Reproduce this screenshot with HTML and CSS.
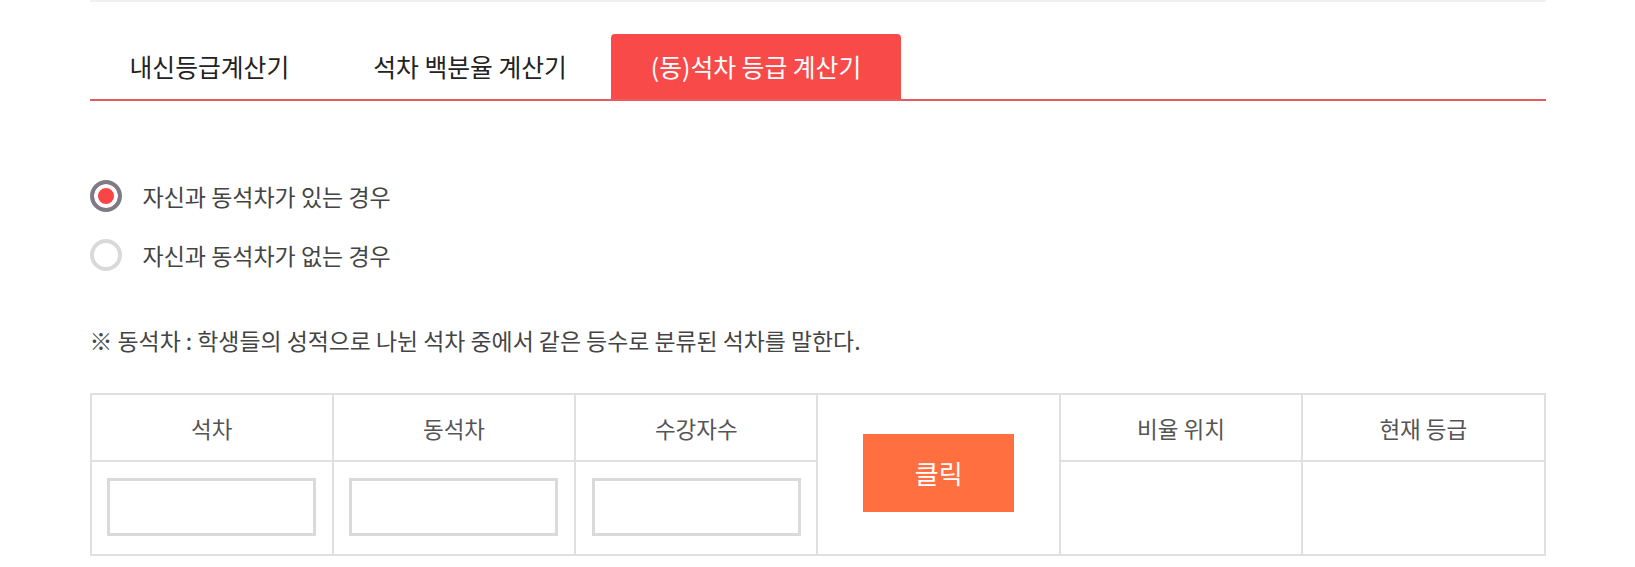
FILE: index.html
```html
<!DOCTYPE html>
<html>
<head>
    <title>석차 등급 계산기</title>
    <link rel="stylesheet" href="styles.css">
</head>
<body>
    <div class="wrap">
        <ul class="tabs">
            <li class="tab">내신등급계산기</li>
            <li class="tab">석차 백분율 계산기</li>
            <li class="tab active">(동)석차 등급 계산기</li>
        </ul>

        <div class="options">
            <label class="option">
                <input type="radio" name="mode" class="radio" checked>
                <span>자신과 동석차가 있는 경우</span>
            </label>
            <label class="option">
                <input type="radio" name="mode" class="radio">
                <span>자신과 동석차가 없는 경우</span>
            </label>
        </div>

        <p class="note">※ 동석차 : 학생들의 성적으로 나뉜 석차 중에서 같은 등수로 분류된 석차를 말한다.</p>

        <table class="calc">
            <tr class="head-row">
                <th>석차</th>
                <th>동석차</th>
                <th>수강자수</th>
                <td rowspan="2" class="btn-cell"><button class="calc-button" id="calc">클릭</button></td>
                <th>비율 위치</th>
                <th>현재 등급</th>
            </tr>
            <tr class="body-row">
                <td><input type="text" class="field" id="rank"></td>
                <td><input type="text" class="field" id="tie"></td>
                <td><input type="text" class="field" id="total"></td>
                <td id="ratio"></td>
                <td id="grade"></td>
            </tr>
        </table>
    </div>
</body>
</html>
```

FILE: styles.css
```css
body {
    margin: 0;
    padding: 0;
    background-color: #fff;
    font-family: "Noto Sans CJK KR", "Noto Sans", sans-serif;
    color: #444;
}

.wrap {
    width: 1456px;
    margin: 0 auto;
    border-top: 2px solid #f0f0f0;
}

/* 탭 메뉴 */
.tabs {
    list-style: none;
    margin: 32px 0 0;
    padding: 0;
    border-bottom: 2px solid #e65c5c;
    display: flex;
    gap: 4px;
}

.tab {
    height: 65px;
    line-height: 65px;
    padding: 0 40px;
    font-size: 24.8px;
    color: #222;
    border-radius: 4px 4px 0 0;
    cursor: pointer;
}

.tab.active {
    background-color: #f94a4a;
    color: #fff;
}

/* 라디오 선택 */
.options {
    margin-top: 75px;
    display: flex;
    flex-direction: column;
    gap: 19px;
}

.option {
    display: flex;
    align-items: center;
    height: 40px;
    font-size: 23px;
    color: #444;
    cursor: pointer;
}

.radio {
    appearance: none;
    -webkit-appearance: none;
    width: 32px;
    height: 32px;
    margin: 0 21px 0 0;
    border: 4px solid #d9d9d9;
    border-radius: 50%;
    background-color: #fff;
}

.radio:checked {
    border-color: #7c7c87;
    background-color: #f94545;
    box-shadow: inset 0 0 0 4px #fff;
}

.note {
    margin: 50px 0 0;
    height: 30px;
    line-height: 30px;
    font-size: 22.9px;
    color: #444;
}

/* 계산 테이블 */
.calc {
    margin-top: 38px;
    width: 100%;
    table-layout: fixed;
    border-collapse: collapse;
}

.calc th,
.calc td {
    border: 2px solid #e0e0e0;
    text-align: center;
    padding: 0;
}

.calc th {
    height: 65px;
    font-size: 22.5px;
    font-weight: normal;
    color: #555;
}

.body-row td {
    height: 92px;
}

.field {
    box-sizing: border-box;
    width: 209px;
    height: 58px;
    margin-top: -2px;
    border: 3px solid #dadada;
    vertical-align: middle;
}

.calc-button {
    width: 151px;
    height: 78px;
    margin-top: -4px;
    border: none;
    background-color: #ff6f40;
    color: #fff;
    font-family: inherit;
    font-size: 26px;
    cursor: pointer;
}
```
